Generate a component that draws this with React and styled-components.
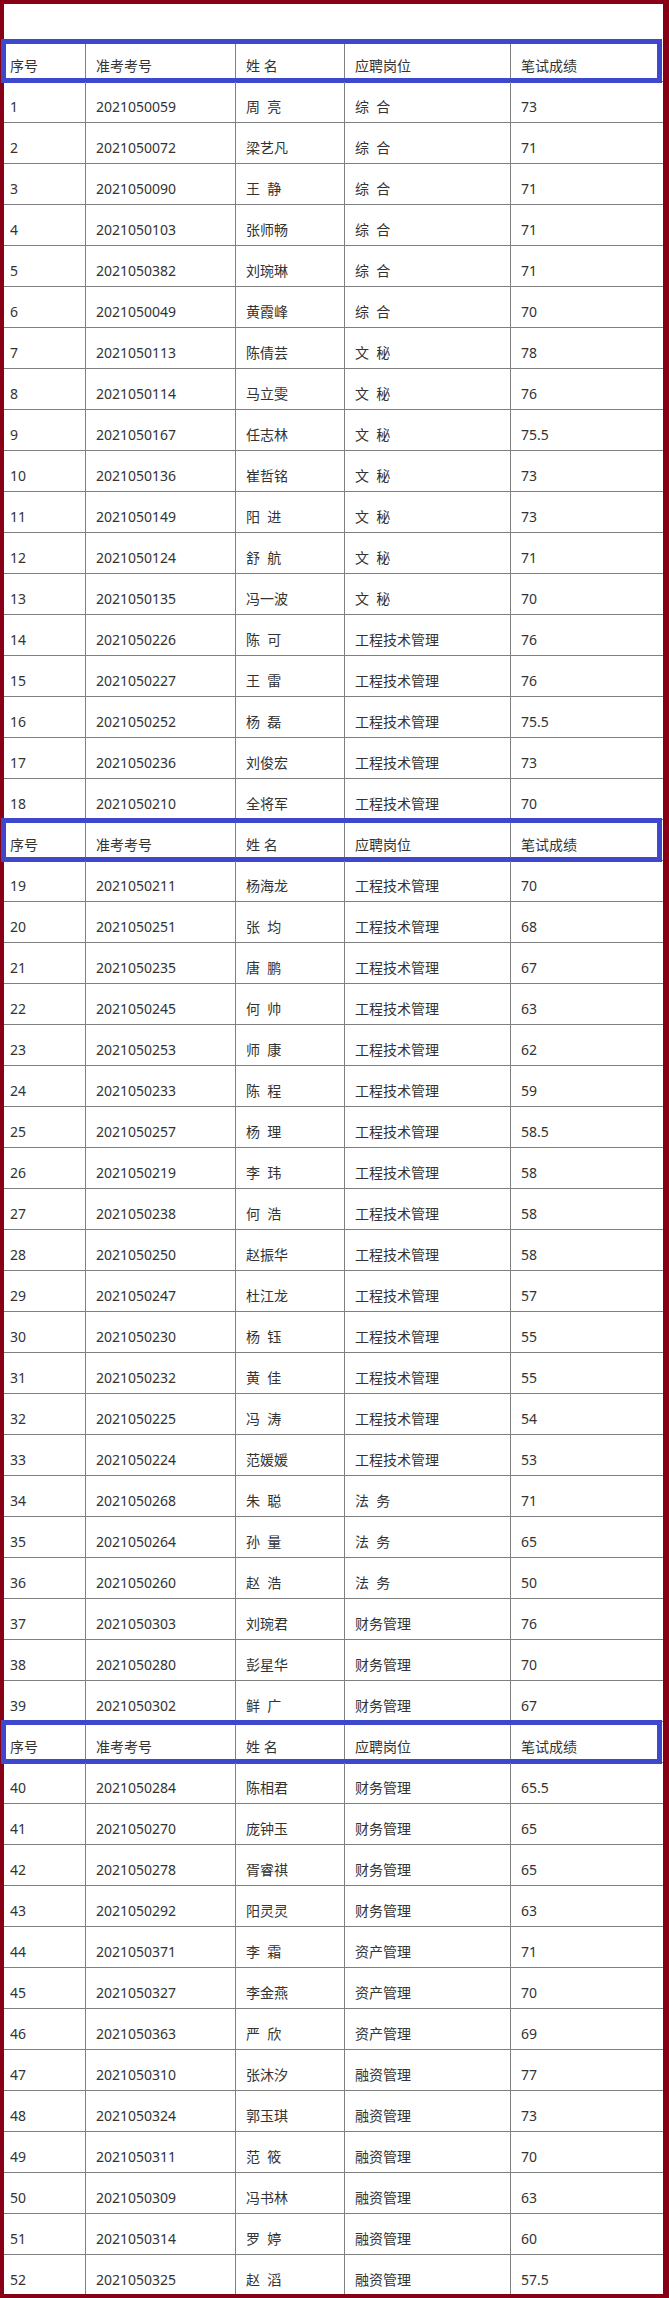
import React from "react";
import styled, { createGlobalStyle } from "styled-components";

const GlobalStyle = createGlobalStyle`
  html, body { margin: 0; padding: 0; background: #fff; }
  body { font-family: "Noto Sans", "Noto Sans CJK SC", sans-serif; }
`;

const Frame = styled.div`
  box-sizing: border-box;
  width: 669px;
  height: 2298px;
  border-style: solid;
  border-color: #880015;
  border-width: 4px 6px 4px 4px;
  padding-top: 37px;
  background: #fff;
`;

const Row = styled.div`
  position: relative;
  display: grid;
  grid-template-columns: 82px 150px 109px 166px 152px;
  box-sizing: border-box;
  height: 41px;
  border-bottom: 1px solid #808080;
  &:last-child {
    border-bottom: none;
    height: 39px;
  }
`;

const HeaderRow = styled(Row)`
  &::after {
    content: "";
    position: absolute;
    top: -2px;
    bottom: -2px;
    left: -3px;
    right: 1px;
    border: 5px solid #3f48cc;
    pointer-events: none;
  }
`;

const Cell = styled.div`
  box-sizing: border-box;
  padding: 15px 0 0 ${(p) => (p.$first ? 6 : 10)}px;
  border-right: ${(p) => (p.$last ? "none" : "1px solid #808080")};
  font-size: 14px;
  line-height: 20px;
  color: #333;
  white-space: pre;
  overflow: hidden;
`;

const S = "\u00a0\u00a0";
const n = (s) => (s.length === 2 ? s[0] + S + s[1] : s);

const raw = [
  ["2021050059", "周亮", "综合", "73"],
  ["2021050072", "梁艺凡", "综合", "71"],
  ["2021050090", "王静", "综合", "71"],
  ["2021050103", "张师畅", "综合", "71"],
  ["2021050382", "刘琬琳", "综合", "71"],
  ["2021050049", "黄霞峰", "综合", "70"],
  ["2021050113", "陈倩芸", "文秘", "78"],
  ["2021050114", "马立雯", "文秘", "76"],
  ["2021050167", "任志林", "文秘", "75.5"],
  ["2021050136", "崔哲铭", "文秘", "73"],
  ["2021050149", "阳进", "文秘", "73"],
  ["2021050124", "舒航", "文秘", "71"],
  ["2021050135", "冯一波", "文秘", "70"],
  ["2021050226", "陈可", "工程技术管理", "76"],
  ["2021050227", "王雷", "工程技术管理", "76"],
  ["2021050252", "杨磊", "工程技术管理", "75.5"],
  ["2021050236", "刘俊宏", "工程技术管理", "73"],
  ["2021050210", "全将军", "工程技术管理", "70"],
  ["2021050211", "杨海龙", "工程技术管理", "70"],
  ["2021050251", "张均", "工程技术管理", "68"],
  ["2021050235", "唐鹏", "工程技术管理", "67"],
  ["2021050245", "何帅", "工程技术管理", "63"],
  ["2021050253", "师康", "工程技术管理", "62"],
  ["2021050233", "陈程", "工程技术管理", "59"],
  ["2021050257", "杨理", "工程技术管理", "58.5"],
  ["2021050219", "李玮", "工程技术管理", "58"],
  ["2021050238", "何浩", "工程技术管理", "58"],
  ["2021050250", "赵振华", "工程技术管理", "58"],
  ["2021050247", "杜江龙", "工程技术管理", "57"],
  ["2021050230", "杨钰", "工程技术管理", "55"],
  ["2021050232", "黄佳", "工程技术管理", "55"],
  ["2021050225", "冯涛", "工程技术管理", "54"],
  ["2021050224", "范媛媛", "工程技术管理", "53"],
  ["2021050268", "朱聪", "法务", "71"],
  ["2021050264", "孙量", "法务", "65"],
  ["2021050260", "赵浩", "法务", "50"],
  ["2021050303", "刘琬君", "财务管理", "76"],
  ["2021050280", "彭星华", "财务管理", "70"],
  ["2021050302", "鲜广", "财务管理", "67"],
  ["2021050284", "陈相君", "财务管理", "65.5"],
  ["2021050270", "庞钟玉", "财务管理", "65"],
  ["2021050278", "胥睿祺", "财务管理", "65"],
  ["2021050292", "阳灵灵", "财务管理", "63"],
  ["2021050371", "李霜", "资产管理", "71"],
  ["2021050327", "李金燕", "资产管理", "70"],
  ["2021050363", "严欣", "资产管理", "69"],
  ["2021050310", "张沐汐", "融资管理", "77"],
  ["2021050324", "郭玉琪", "融资管理", "73"],
  ["2021050311", "范筱", "融资管理", "70"],
  ["2021050309", "冯书林", "融资管理", "63"],
  ["2021050314", "罗婷", "融资管理", "60"],
  ["2021050325", "赵滔", "融资管理", "57.5"],
];

const headers = ["序号", "准考考号", "姓 名", "应聘岗位", "笔试成绩"];

function Header() {
  return (
    <HeaderRow>
      {headers.map((h, i) => (
        <Cell key={i} $first={i === 0} $last={i === 4}>
          {h}
        </Cell>
      ))}
    </HeaderRow>
  );
}

function DataRow({ idx, r }) {
  const vals = [String(idx), r[0], n(r[1]), n(r[2]), r[3]];
  return (
    <Row>
      {vals.map((v, i) => (
        <Cell key={i} $first={i === 0} $last={i === 4}>
          {v}
        </Cell>
      ))}
    </Row>
  );
}

export default function App() {
  const items = [];
  raw.forEach((r, i) => {
    const idx = i + 1;
    if (idx === 1 || idx === 19 || idx === 40) items.push(<Header key={"h" + idx} />);
    items.push(<DataRow key={idx} idx={idx} r={r} />);
  });
  return (
    <>
      <GlobalStyle />
      <Frame>{items}</Frame>
    </>
  );
}
